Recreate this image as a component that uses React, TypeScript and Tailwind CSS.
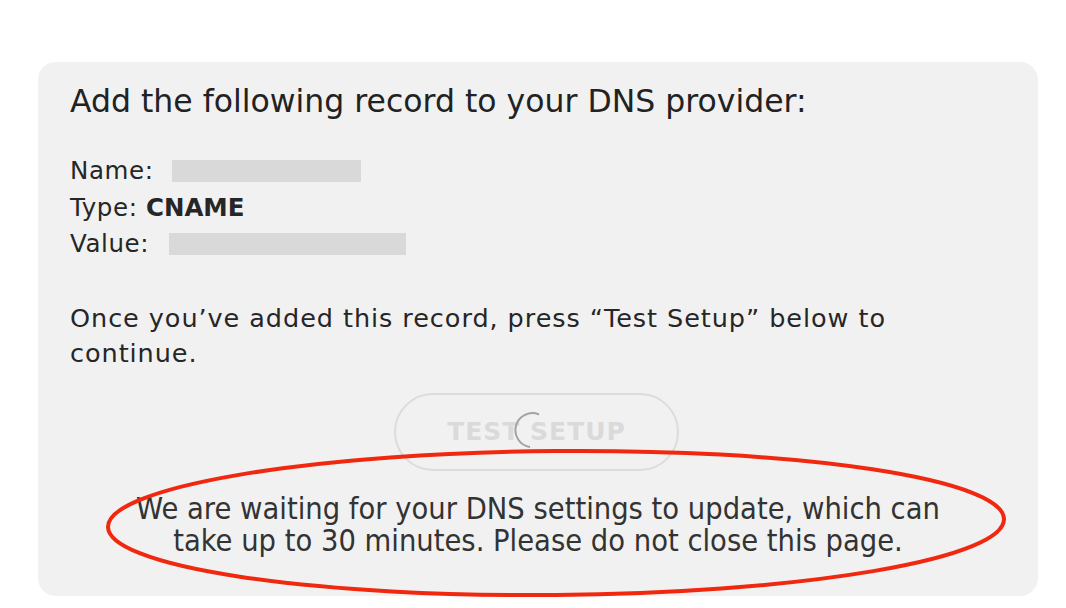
import React from "react";

const App = () => {
  return (
    <div className="w-[1066px] h-[608px] bg-white overflow-hidden relative font-['DejaVu_Sans',sans-serif] text-[#262626]">
      <div className="ml-[38px] mt-[62px] w-[1000px] h-[534px] bg-[#f1f1f1] rounded-[18px] px-[32px] pt-[80px] relative">
        <div className="absolute left-[32px] top-[18px] text-[31.5px] leading-[42px] text-[#222]">
          Add the following record to your DNS provider:
        </div>
        <div className="text-[24.5px] tracking-[0.6px] leading-[36.5px] pt-[11px]">
          <div className="flex items-center">
            <span>Name:</span>
            <span className="ml-[18px] w-[189px] h-[22px] bg-[#d9d9d9]" />
          </div>
          <div>
            Type: <span className="font-bold tracking-normal">CNAME</span>
          </div>
          <div className="flex items-center">
            <span>Value:</span>
            <span className="ml-[20px] w-[237px] h-[22px] bg-[#d9d9d9]" />
          </div>
        </div>
        <p className="mt-[38px] text-[25.5px] tracking-[0.95px] leading-[35px] w-[890px]">
          Once you’ve added this record, press “Test Setup” below to continue.
        </p>
        <div className="flex justify-center mt-[22px] pr-[3px]">
          <div className="relative w-[285px] h-[78px] rounded-full border-2 border-[#dcdcdc] flex items-center justify-center">
            <span className="text-[25px] font-bold tracking-[1px] text-[#dadada]">TEST SETUP</span>
            <svg className="absolute left-[117px] top-[16px]" width="38" height="38" viewBox="0 0 38 38">
              <path d="M26 3.5 A17 17 0 1 0 17 36" fill="none" stroke="#a3a3a3" strokeWidth="2" />
            </svg>
          </div>
        </div>
        <div className="mt-[22px] text-center text-[30.5px] leading-[32px] font-['DejaVu_Sans_Condensed','DejaVu_Sans',sans-serif] text-[#333]">
          We are waiting for your DNS settings to update, which can
          <br />
          take up to 30 minutes. Please do not close this page.
        </div>
      </div>
      <svg className="absolute left-0 top-0" width="1066" height="608" viewBox="0 0 1066 608">
        <ellipse cx="556" cy="523" rx="448" ry="72" fill="none" stroke="#f0280f" strokeWidth="4" transform="rotate(-0.5 556 523)" />
      </svg>
    </div>
  );
};

export default App;
